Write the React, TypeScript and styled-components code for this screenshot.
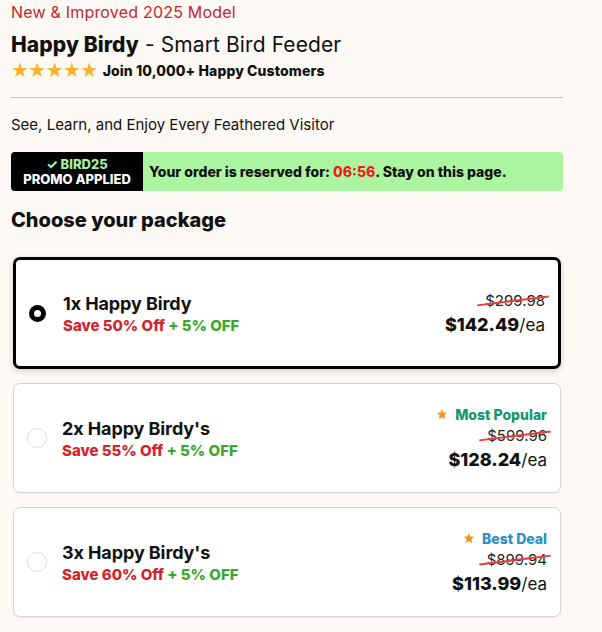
import { FC } from "react";
import styled, { createGlobalStyle } from "styled-components";

const GlobalStyle = createGlobalStyle`
  html, body {
    margin: 0;
    padding: 0;
    background-color: #fdf9f4;
  }
  body {
    font-family: Inter, "Liberation Sans", sans-serif;
    color: #111;
  }
`;

const Page = styled.div`
  width: 552px;
  padding: 3px 0 16px 11px;
`;

const Tagline = styled.div`
  color: #c4262e;
  font-size: 16px;
  line-height: 19px;
  letter-spacing: 0.2px;
`;

const Title = styled.h1`
  margin: 10px 0 0;
  font-size: 21px;
  line-height: 25px;
  font-weight: 400;
  letter-spacing: 0.1px;

  & > b {
    font-weight: 800;
  }
`;

const RatingRow = styled.div`
  display: flex;
  align-items: center;
  gap: 5px;
  margin-top: 3px;
  font-size: 14px;
  font-weight: 800;
  letter-spacing: 0.1px;
`;

const Stars = styled.span`
  color: #f7b32b;
  font-size: 20px;
  letter-spacing: -0.6px;
  line-height: 20px;
  font-family: "DejaVu Sans", sans-serif;
`;

const Divider = styled.hr`
  margin: 17px 0 0;
  border: none;
  border-top: 1px solid #c9c6c2;
`;

const Subtitle = styled.p`
  margin: 17px 0 0;
  font-size: 15px;
  line-height: 20px;
`;

const PromoBar = styled.div`
  display: flex;
  margin-top: 17px;
  height: 39px;
  border-radius: 4px;
  overflow: hidden;
  background-color: #abf5a1;
`;

const PromoBadge = styled.div`
  display: flex;
  flex-direction: column;
  align-items: center;
  justify-content: center;
  width: 132px;
  background-color: #000;
  color: #fff;
  font-size: 13px;
  font-weight: 800;
  line-height: 15px;
`;

const PromoCode = styled.span`
  color: #a9f29e;
`;

const PromoText = styled.div`
  display: flex;
  align-items: center;
  padding-left: 6px;
  font-size: 14px;
  font-weight: 800;
  color: #111;
`;

const Timer = styled.span`
  color: #f11a1a;
`;

const SectionTitle = styled.h2`
  margin: 16px 0 0;
  font-size: 20px;
  line-height: 26px;
  font-weight: 800;
`;

const CardList = styled.div`
  display: flex;
  flex-direction: column;
  gap: 14px;
  margin-top: 24px;
  padding: 0 2px;
`;

const Card = styled.div<{ $active?: boolean }>`
  display: flex;
  align-items: center;
  height: ${(p) => (p.$active ? "106px" : "108px")};
  padding: 0 12px 0 ${(p) => (p.$active ? "13px" : "12px")};
  border: ${(p) => (p.$active ? "3px solid #000" : "1px solid #d6d4d2")};
  border-radius: 7px;
  background-color: #fff;
  box-shadow: ${(p) =>
    p.$active ? "0 2px 6px rgba(0,0,0,0.18)" : "0 1px 2px rgba(0,0,0,0.06)"};
`;

const Radio = styled.span<{ $active?: boolean }>`
  box-sizing: border-box;
  flex: none;
  width: ${(p) => (p.$active ? "17px" : "20px")};
  height: ${(p) => (p.$active ? "17px" : "20px")};
  margin-left: ${(p) => (p.$active ? "0" : "1px")};
  border-radius: 50%;
  border: ${(p) => (p.$active ? "5px solid #000" : "1px solid #dcdcdc")};
`;

const Info = styled.div<{ $active?: boolean }>`
  display: flex;
  flex-direction: column;
  margin-left: ${(p) => (p.$active ? "17px" : "15px")};
  flex: 1;
`;

const Name = styled.div`
  font-size: 18px;
  font-weight: 700;
  line-height: 24px;
  letter-spacing: -0.1px;
`;

const Savings = styled.div`
  font-size: 15px;
  font-weight: 800;
  line-height: 19px;
  color: #d4222c;
`;

const Extra = styled.span`
  color: #3aa72b;
`;

const Pricing = styled.div`
  display: flex;
  flex-direction: column;
  align-items: flex-end;
  padding-right: 1px;
`;

const Label = styled.div<{ $color: string }>`
  display: flex;
  align-items: center;
  gap: 7px;
  color: ${(p) => p.$color};
  font-size: 14px;
  font-weight: 800;
  line-height: 17px;
  margin-bottom: 3px;
`;

const OldPrice = styled.span`
  position: relative;
  font-size: 15px;
  line-height: 19px;
  color: #222;

  &::after {
    content: "";
    position: absolute;
    left: -8px;
    right: -4px;
    top: 50%;
    height: 1.5px;
    background-color: #ef3b3b;
    transform: rotate(-7deg);
  }
`;

const NowPrice = styled.div`
  margin-top: 4px;
  font-size: 18px;
  line-height: 22px;
  font-weight: 800;

  & > span {
    font-weight: 400;
    font-size: 17px;
  }
`;

const StarIcon: FC<{ color: string }> = ({ color }) => (
  <svg width="12" height="12" viewBox="0 0 24 24">
    <path
      d="M12 2l3 6.9 7.4.7-5.6 5 1.7 7.4L12 18.3 5.5 22l1.7-7.4-5.6-5 7.4-.7z"
      fill={color}
    />
  </svg>
);

type Pack = {
  name: string;
  save: string;
  old: string;
  price: string;
  active?: boolean;
  label?: { text: string; color: string };
};

const packs: Pack[] = [
  { name: "1x Happy Birdy", save: "Save 50% Off", old: "$299.98", price: "$142.49", active: true },
  {
    name: "2x Happy Birdy's",
    save: "Save 55% Off",
    old: "$599.96",
    price: "$128.24",
    label: { text: "Most Popular", color: "#16966e" },
  },
  {
    name: "3x Happy Birdy's",
    save: "Save 60% Off",
    old: "$899.94",
    price: "$113.99",
    label: { text: "Best Deal", color: "#2b90c8" },
  },
];

export const App: FC = () => {
  return (
    <Page>
      <GlobalStyle />
      <Tagline>New &amp; Improved 2025 Model</Tagline>
      <Title>
        <b>Happy Birdy</b> - Smart Bird Feeder
      </Title>
      <RatingRow>
        <Stars>★★★★★</Stars>
        Join 10,000+ Happy Customers
      </RatingRow>
      <Divider />
      <Subtitle>See, Learn, and Enjoy Every Feathered Visitor</Subtitle>
      <PromoBar>
        <PromoBadge>
          <PromoCode>✓ BIRD25</PromoCode>
          PROMO APPLIED
        </PromoBadge>
        <PromoText>
          Your order is reserved for:&nbsp;<Timer>06:56</Timer>. Stay on this page.
        </PromoText>
      </PromoBar>
      <SectionTitle>Choose your package</SectionTitle>
      <CardList>
        {packs.map((p) => (
          <Card key={p.name} $active={p.active}>
            <Radio $active={p.active} />
            <Info $active={p.active}>
              <Name>{p.name}</Name>
              <Savings>
                {p.save} <Extra>+ 5% OFF</Extra>
              </Savings>
            </Info>
            <Pricing>
              {p.label && (
                <Label $color={p.label.color}>
                  <StarIcon color="#f7941d" />
                  {p.label.text}
                </Label>
              )}
              <OldPrice>{p.old}</OldPrice>
              <NowPrice>
                {p.price}
                <span>/ea</span>
              </NowPrice>
            </Pricing>
          </Card>
        ))}
      </CardList>
    </Page>
  );
};

export default App;
